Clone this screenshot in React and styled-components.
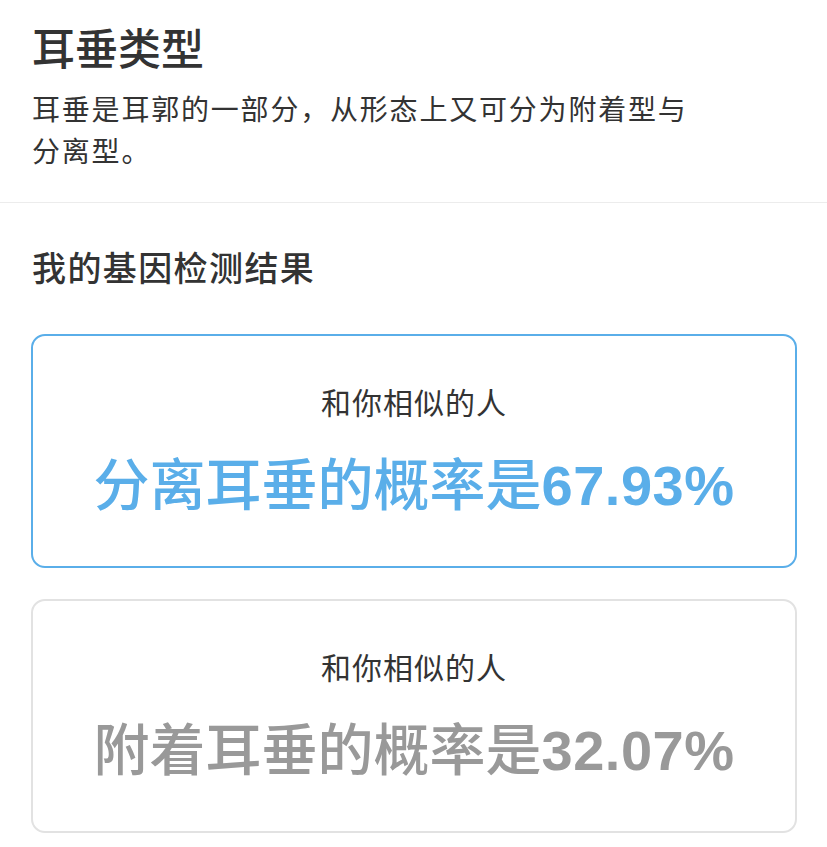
import React from "react";
import styled, { createGlobalStyle } from "styled-components";

const GlobalStyle = createGlobalStyle`
  body {
    margin: 0;
    background: #ffffff;
    font-family: "Liberation Sans", "Noto Sans CJK SC", sans-serif;
    color: #333333;
  }
`;

// styled components ********

const Page = styled.div`
  width: 827px;
`;

const Intro = styled.header`
  padding: 24px 32px 28px;
  border-bottom: 1px solid #ececec;
`;

const Title = styled.h1`
  margin: 0 0 14px;
  font-size: 43px;
  line-height: 52px;
  font-weight: 500;
  color: #333333;
`;

const Description = styled.p`
  margin: 0;
  width: 670px;
  font-size: 28px;
  line-height: 42px;
  letter-spacing: 1.8px;
  color: #333333;
`;

const Results = styled.section`
  padding: 42px 30px 0 31px;
`;

const SectionTitle = styled.h2`
  margin: 0 0 41px;
  font-size: 34px;
  line-height: 48px;
  font-weight: 500;
  letter-spacing: 1.4px;
  padding-left: 1px;
  color: #333333;
`;

const CardList = styled.div`
  display: flex;
  flex-direction: column;
  gap: 31px;
`;

const Card = styled.div`
  height: 234px;
  box-sizing: border-box;
  border: 2px solid ${(p) => (p.$active ? "#5aaee9" : "#e2e2e2")};
  border-radius: 14px;
  display: flex;
  flex-direction: column;
  align-items: center;
  padding-top: 48px;
`;

const CardLabel = styled.div`
  font-size: 30px;
  line-height: 40px;
  letter-spacing: 1px;
  color: #333333;
`;

const Probability = styled.div`
  margin-top: 26px;
  font-size: 56px;
  line-height: 72px;
  font-weight: 500;
  color: ${(p) => (p.$active ? "#5aaee9" : "#999999")};
`;

const Percent = styled.span`
  font-weight: 700;
  letter-spacing: 0.5px;
`;

// ***************

const results = [
  { label: "分离耳垂", value: "67.93%", active: true },
  { label: "附着耳垂", value: "32.07%", active: false },
];

const App = () => {
  return (
    <Page>
      <GlobalStyle />
      <Intro>
        <Title>耳垂类型</Title>
        <Description>
          耳垂是耳郭的一部分，从形态上又可分为附着型与分离型。
        </Description>
      </Intro>
      <Results>
        <SectionTitle>我的基因检测结果</SectionTitle>
        <CardList>
          {results.map((r) => (
            <Card key={r.label} $active={r.active}>
              <CardLabel>和你相似的人</CardLabel>
              <Probability $active={r.active}>
                {r.label}的概率是<Percent>{r.value}</Percent>
              </Probability>
            </Card>
          ))}
        </CardList>
      </Results>
    </Page>
  );
};

export default App;
